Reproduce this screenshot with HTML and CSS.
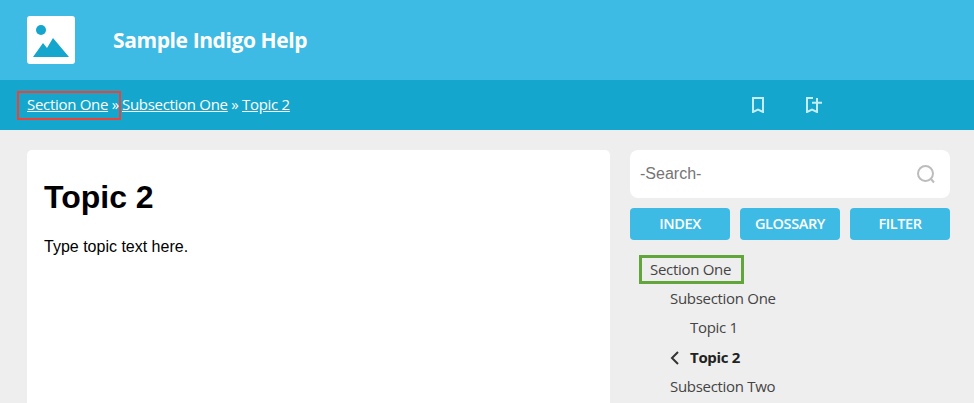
FILE: index.html
```html
<!DOCTYPE html>
<html lang="en">
<head>
  <meta charset="UTF-8">
  <meta name="viewport" content="width=device-width, initial-scale=1.0">
  <title>Sample Indigo Help</title>
  <link rel="stylesheet" href="styles.css">
</head>
<body>

  <!-- Header -->
  <header class="header">
    <svg width="48" height="48" viewBox="0 0 48 48">
      <rect width="48" height="48" rx="3" fill="#fff"/>
      <circle cx="14" cy="14" r="5" fill="#14a6cc"/>
      <path d="M6 41 L16 27 L20 32 L26 22 L42 41 Z" fill="#14a6cc"/>
    </svg>
    <div class="site-title">Sample Indigo Help</div>
  </header>

  <!-- Breadcrumbs and bookmark icons -->
  <nav class="toolbar">
    <div class="crumbs">
      <span class="crumb-box"><a href="#">Section One</a> »</span><a class="crumb-next" href="#">Subsection One</a> » <a href="#">Topic 2</a>
    </div>
    <div class="tools">
      <svg width="16" height="16" viewBox="0 0 16 16" fill="none" stroke="#c5edf6" stroke-width="2">
        <path d="M3 1 H13 V15 L8 12.5 L3 15 Z"/>
      </svg>
      <svg width="16" height="16" viewBox="0 0 16 16" fill="none" stroke="#c5edf6" stroke-width="2">
        <path d="M7 1 H1 V15 L6 12.5 L11 15 V10"/>
        <path d="M6 5.7 H16 M11 1 V10"/>
      </svg>
    </div>
  </nav>

  <div class="main">
    <!-- Topic -->
    <main class="topic">
      <h1>Topic 2</h1>
      <p>Type topic text here.</p>
    </main>

    <!-- Sidebar -->
    <aside class="sidebar">
      <div class="search">
        <span>-Search-</span>
        <svg width="20" height="20" viewBox="0 0 20 20" fill="none" stroke="#bcbcbc" stroke-width="2">
          <circle cx="9.5" cy="9.5" r="7.5"/>
          <path d="M15 15 L18 18.5"/>
        </svg>
      </div>
      <div class="buttons">
        <a class="btn" href="#">INDEX</a>
        <a class="btn" href="#">GLOSSARY</a>
        <a class="btn" href="#">FILTER</a>
      </div>
      <ul class="toc">
        <li class="toc-row"><span class="toc-current">Section One</span></li>
        <li class="toc-row level2">Subsection One</li>
        <li class="toc-row level3">Topic 1</li>
        <li class="toc-row level3 active">
          <svg class="arrow" width="10" height="16" viewBox="0 0 10 16" fill="none" stroke="#333" stroke-width="2">
            <path d="M8 2 L2 8 L8 14"/>
          </svg>
          Topic 2
        </li>
        <li class="toc-row level2">Subsection Two</li>
      </ul>
    </aside>
  </div>

</body>
</html>
```

FILE: styles.css
```css
/* General Styles */
body {
  margin: 0;
  background: #eeeeee;
  font-family: 'Open Sans', sans-serif;
}

/* Header */
.header {
  display: flex;
  align-items: center;
  height: 80px;
  padding-left: 27px;
  background: #3dbbe4;
}
.site-title {
  margin-left: 38px;
  color: white;
  font-size: 21px;
  font-weight: 700;
  letter-spacing: -0.4px;
}

/* Toolbar */
.toolbar {
  display: flex;
  align-items: center;
  height: 50px;
  background: #14a6cc;
}
.crumbs {
  width: 740px;
  padding-left: 17px;
  box-sizing: border-box;
  color: white;
  font-size: 15px;
  letter-spacing: -0.3px;
  white-space: nowrap;
}
.crumbs a {
  color: white;
}
.crumb-next {
  margin-left: 1px;
}
.crumb-box {
  display: inline-block;
  width: 92px;
  padding: 1px 0 4px 8px;
  border: 2px solid #ef4136;
  line-height: 20px;
  white-space: nowrap;
}
.tools {
  display: flex;
  align-items: center;
  gap: 40px;
  margin-left: 10px;
}

/* Page layout */
.main {
  display: flex;
  gap: 20px;
  height: 273px;
  box-sizing: border-box;
  padding: 20px 24px 0 27px;
  overflow: hidden;
}
.topic {
  width: 583px;
  box-sizing: border-box;
  padding: 29px 17px 0;
  background: white;
  border-radius: 5px 5px 0 0;
  font-family: 'Liberation Sans', Arial, sans-serif;
}
.topic h1 {
  margin: 0;
  font-size: 32px;
  line-height: 37px;
  color: black;
}
.topic p {
  margin: 22px 0 0;
  font-size: 16px;
  line-height: 18px;
  color: black;
}

/* Sidebar */
.sidebar {
  width: 320px;
}
.search {
  display: flex;
  align-items: center;
  justify-content: space-between;
  height: 48px;
  padding: 0 14px 0 10px;
  background: white;
  border-radius: 8px;
  color: #757575;
  font-family: 'Liberation Sans', Arial, sans-serif;
  font-size: 16px;
}
.buttons {
  display: flex;
  gap: 10px;
  margin-top: 10px;
}
.btn {
  flex: 1;
  height: 32px;
  line-height: 31px;
  background: #3dbbe4;
  border-radius: 4px;
  color: white;
  font-size: 14.5px;
  font-weight: 600;
  letter-spacing: -0.4px;
  text-align: center;
  text-decoration: none;
}

/* Table of contents */
.toc {
  margin: 15px 0 0;
  padding: 0;
  list-style: none;
  color: #444444;
  font-size: 15px;
  letter-spacing: -0.3px;
}
.toc-row {
  position: relative;
  height: 29.2px;
  line-height: 29px;
}
.toc-current {
  display: inline-block;
  width: 91px;
  height: 23px;
  line-height: 23px;
  margin-left: 9px;
  padding-left: 8px;
  border: 3px solid #62a53a;
}
.level2 {
  padding-left: 40px;
}
.level3 {
  padding-left: 60px;
}
.active {
  font-weight: 700;
  color: #222222;
}
.arrow {
  position: absolute;
  left: 40px;
  top: 7px;
}
```
